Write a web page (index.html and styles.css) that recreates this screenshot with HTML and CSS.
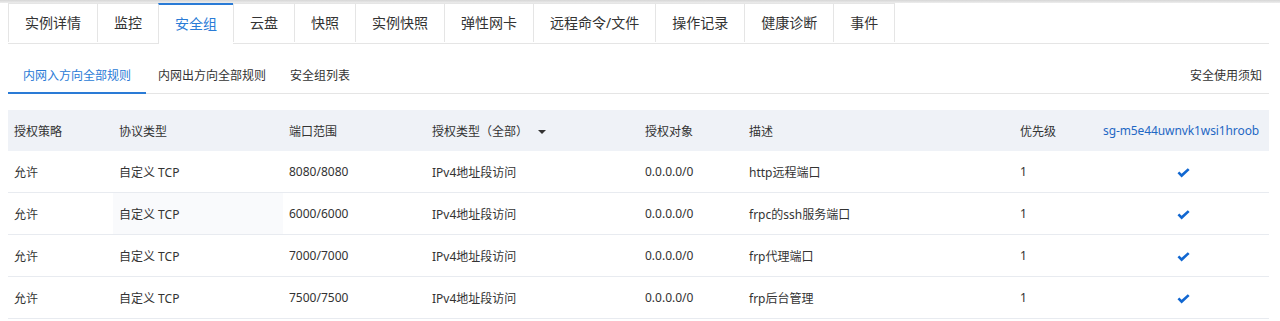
FILE: index.html
```html
<!DOCTYPE html>
<html lang="zh-CN">
<head>
    <meta charset="UTF-8">
    <title>安全组</title>
    <link rel="stylesheet" href="styles.css">
</head>
<body>
    <div class="topbar"></div>
    <div class="page">
        <!-- main tabs -->
        <div class="tabs">
            <div class="tab">实例详情</div>
            <div class="tab">监控</div>
            <div class="tab active">安全组</div>
            <div class="tab">云盘</div>
            <div class="tab">快照</div>
            <div class="tab">实例快照</div>
            <div class="tab">弹性网卡</div>
            <div class="tab">远程命令/文件</div>
            <div class="tab">操作记录</div>
            <div class="tab">健康诊断</div>
            <div class="tab">事件</div>
        </div>

        <!-- sub tabs -->
        <div class="subnav">
            <div class="subtab first active">内网入方向全部规则</div>
            <div class="subtab">内网出方向全部规则</div>
            <div class="subtab">安全组列表</div>
            <div class="notice">安全使用须知</div>
        </div>

        <table class="rules">
            <colgroup>
                <col style="width:105px">
                <col style="width:170px">
                <col style="width:143px">
                <col style="width:213px">
                <col style="width:104px">
                <col style="width:271px">
                <col style="width:83px">
                <col style="width:172px">
            </colgroup>
            <thead>
                <tr>
                    <th>授权策略</th>
                    <th>协议类型</th>
                    <th>端口范围</th>
                    <th>授权类型（全部）<span class="caret"></span></th>
                    <th>授权对象</th>
                    <th>描述</th>
                    <th>优先级</th>
                    <th class="sg">sg-m5e44uwnvk1wsi1hroob</th>
                </tr>
            </thead>
            <tbody>
                <tr>
                    <td>允许</td>
                    <td>自定义 TCP</td>
                    <td>8080/8080</td>
                    <td>IPv4地址段访问</td>
                    <td>0.0.0.0/0</td>
                    <td>http远程端口</td>
                    <td>1</td>
                    <td class="check"><svg width="13" height="10" viewBox="0 0 13 10"><path d="M0.5 5.2 L2.3 3.6 L4.6 5.8 L10.8 0.2 L12.6 1.9 L4.6 9.4 Z" fill="#1167d1"/></svg></td>
                </tr>
                <tr>
                    <td>允许</td>
                    <td class="hover">自定义 TCP</td>
                    <td>6000/6000</td>
                    <td>IPv4地址段访问</td>
                    <td>0.0.0.0/0</td>
                    <td>frpc的ssh服务端口</td>
                    <td>1</td>
                    <td class="check"><svg width="13" height="10" viewBox="0 0 13 10"><path d="M0.5 5.2 L2.3 3.6 L4.6 5.8 L10.8 0.2 L12.6 1.9 L4.6 9.4 Z" fill="#1167d1"/></svg></td>
                </tr>
                <tr>
                    <td>允许</td>
                    <td>自定义 TCP</td>
                    <td>7000/7000</td>
                    <td>IPv4地址段访问</td>
                    <td>0.0.0.0/0</td>
                    <td>frp代理端口</td>
                    <td>1</td>
                    <td class="check"><svg width="13" height="10" viewBox="0 0 13 10"><path d="M0.5 5.2 L2.3 3.6 L4.6 5.8 L10.8 0.2 L12.6 1.9 L4.6 9.4 Z" fill="#1167d1"/></svg></td>
                </tr>
                <tr>
                    <td>允许</td>
                    <td>自定义 TCP</td>
                    <td>7500/7500</td>
                    <td>IPv4地址段访问</td>
                    <td>0.0.0.0/0</td>
                    <td>frp后台管理</td>
                    <td>1</td>
                    <td class="check"><svg width="13" height="10" viewBox="0 0 13 10"><path d="M0.5 5.2 L2.3 3.6 L4.6 5.8 L10.8 0.2 L12.6 1.9 L4.6 9.4 Z" fill="#1167d1"/></svg></td>
                </tr>
            </tbody>
        </table>
    </div>
</body>
</html>
```

FILE: styles.css
```css
body {
    margin: 0;
    padding: 0;
    font-family: 'Noto Sans', 'Noto Sans CJK SC', sans-serif;
    font-size: 12px;
    color: #333;
    background-color: #fff;
}

.topbar {
    height: 3px;
    background: linear-gradient(#d6d6d6, #ededed);
}

.page {
    padding: 0 11px 0 8px;
}

/* main tabs */
.tabs {
    display: flex;
    border-bottom: 1px solid #e5e5e5;
}

.tab {
    padding: 0 16px;
    font-size: 14px;
    line-height: 38px;
    height: 38px;
    border-top: 1px solid #e5e5e5;
    border-left: 1px solid #e5e5e5;
    color: #333;
    white-space: nowrap;
}

.tab:last-child {
    border-right: 1px solid #e5e5e5;
}

.tab.active {
    color: #2a7bd6;
    border-top: 2px solid #2a7bd6;
    height: 38px;
    line-height: 37px;
    margin-bottom: -1px;
    padding-bottom: 1px;
    background-color: #fff;
}

/* sub tabs */
.subnav {
    display: flex;
    align-items: flex-end;
    margin-top: 16px;
    border-bottom: 1px solid #e5e5e5;
}

.subtab {
    padding: 0 12px;
    line-height: 32px;
    border-bottom: 2px solid transparent;
    margin-bottom: -1px;
    white-space: nowrap;
}

.subtab.first {
    padding: 0 15px;
}

.subtab.active {
    color: #2a7bd6;
    border-bottom-color: #2a7bd6;
}

.notice {
    margin-left: auto;
    padding-right: 7px;
    line-height: 32px;
    margin-bottom: 1px;
}

/* rules table */
.rules {
    width: 1261px;
    margin-top: 16px;
    border-collapse: collapse;
    table-layout: fixed;
}

.rules th,
.rules td {
    padding: 0 6px;
    text-align: left;
    font-weight: normal;
    white-space: nowrap;
    overflow: hidden;
}

.rules th {
    height: 41px;
    background-color: #eff2f7;
    color: #333;
}

.rules td {
    height: 41px;
    border-bottom: 1px solid #e8ebf0;
}

.rules th.sg {
    color: #1f68c4;
    letter-spacing: -0.1px;
}

.rules td.check {
    text-align: center;
    padding: 0;
}

.rules td.check svg {
    vertical-align: middle;
}

.rules td.hover {
    background-color: #f9fafc;
}

.caret {
    display: inline-block;
    width: 0;
    height: 0;
    margin-left: 10px;
    border-left: 4px solid transparent;
    border-right: 4px solid transparent;
    border-top: 4px solid #333;
    vertical-align: middle;
}
```
